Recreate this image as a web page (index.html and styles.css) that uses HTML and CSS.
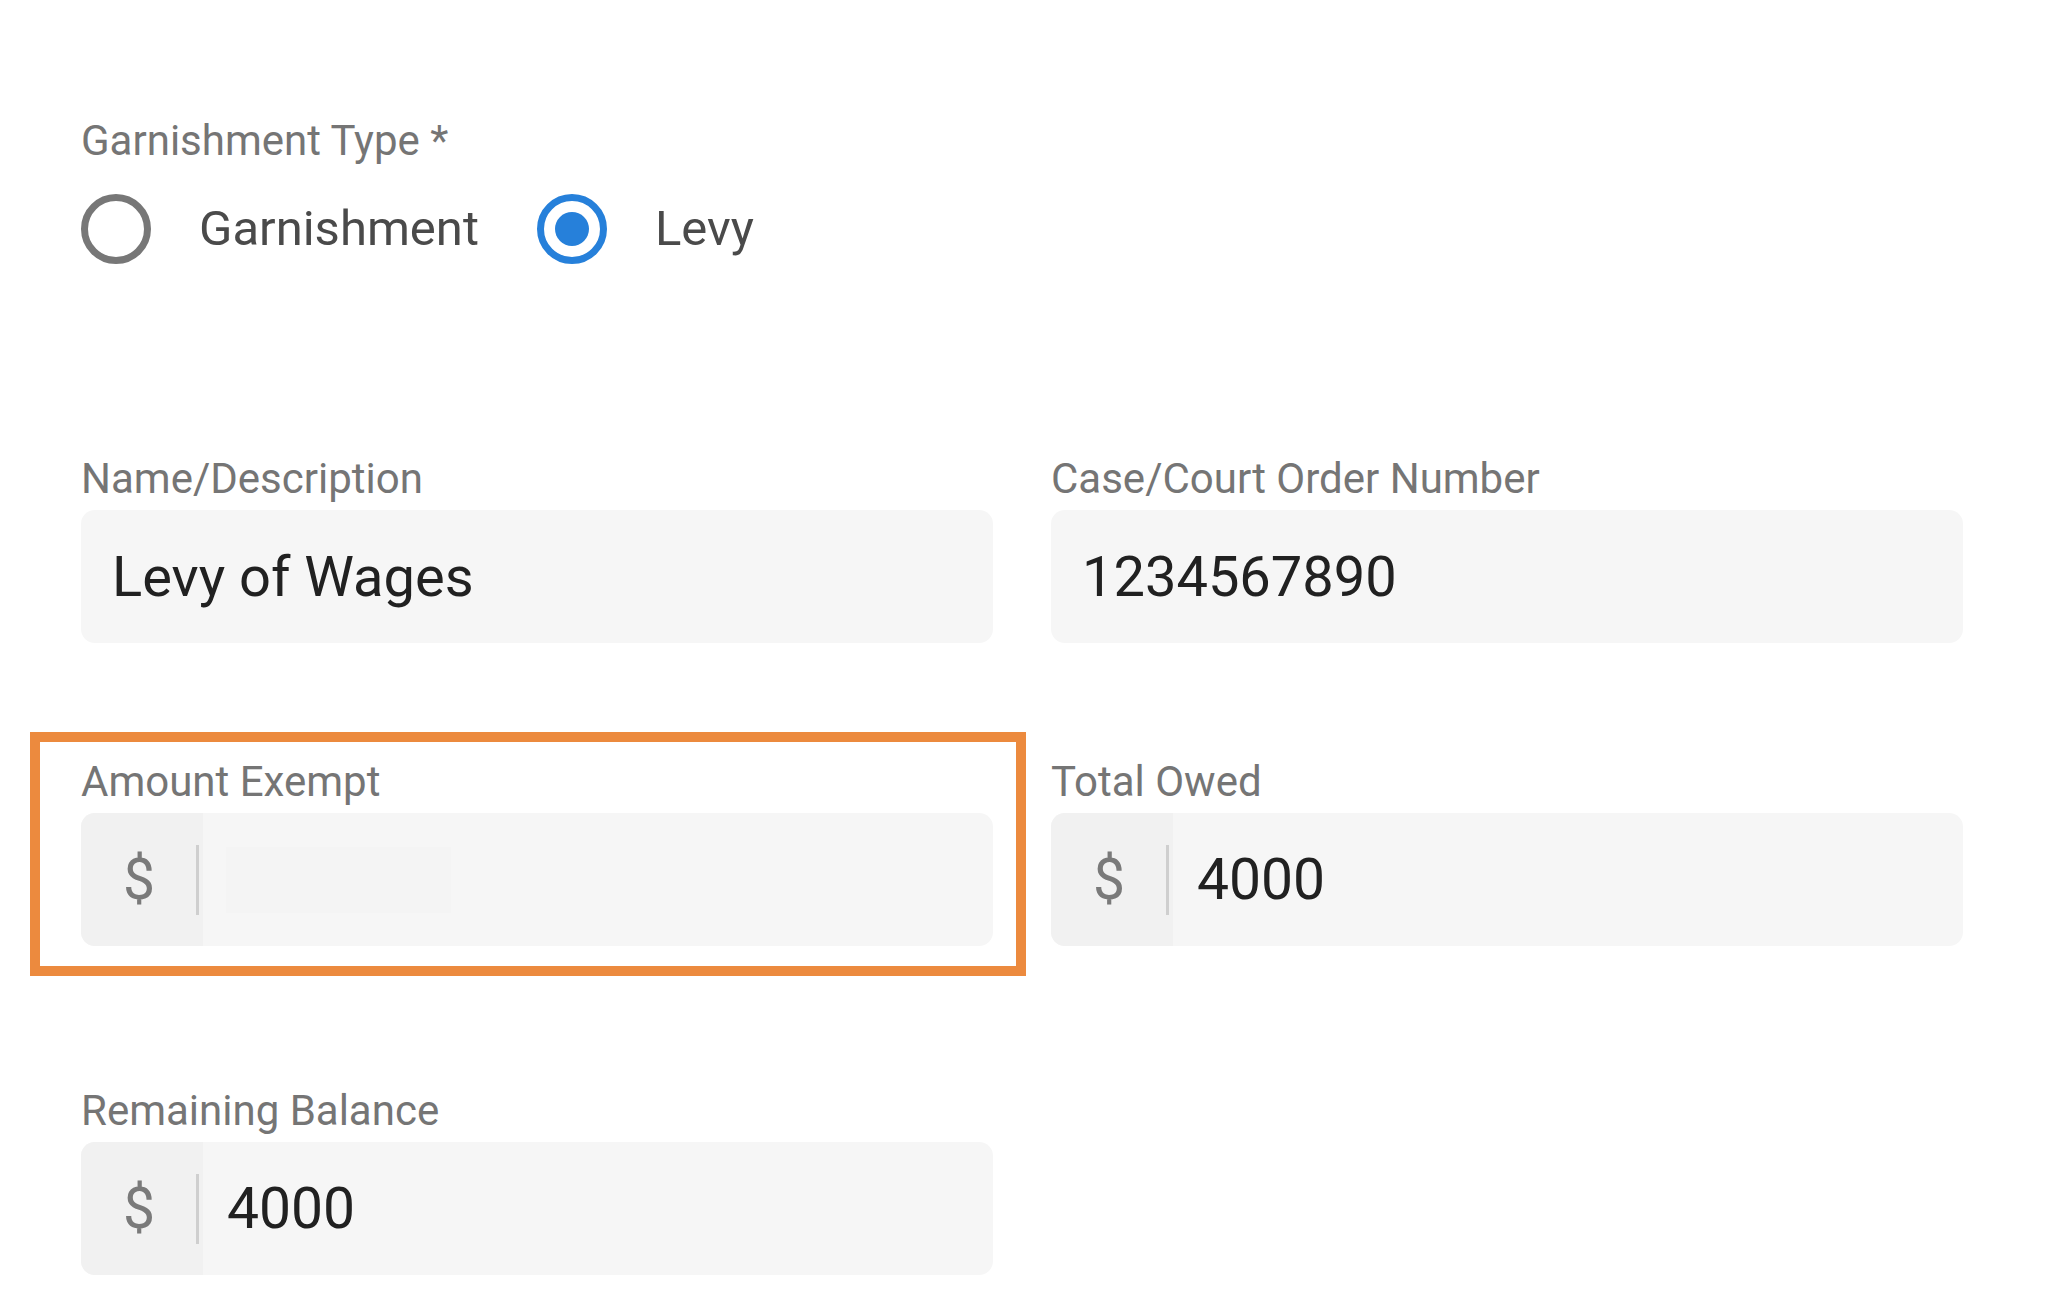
FILE: index.html
```html
<!DOCTYPE html>
<html lang="en">
<head>
    <meta charset="UTF-8">
    <meta name="viewport" content="width=device-width, initial-scale=1.0">
    <title>Garnishment</title>
    <link rel="stylesheet" href="styles.css">
</head>
<body>
    <div class="form">
        <div class="field-label">Garnishment Type *</div>
        <div class="radio-group">
            <div class="option">
                <span class="radio"></span>
                <span class="option-text">Garnishment</span>
            </div>
            <div class="option">
                <span class="radio checked"></span>
                <span class="option-text">Levy</span>
            </div>
        </div>

        <div class="row row-first">
            <div class="field">
                <div class="field-label">Name/Description</div>
                <div class="input">
                    <span class="value plain">Levy of Wages</span>
                </div>
            </div>
            <div class="field">
                <div class="field-label">Case/Court Order Number</div>
                <div class="input">
                    <span class="value plain">1234567890</span>
                </div>
            </div>
        </div>

        <div class="row row-second">
            <div class="field highlighted">
                <div class="field-label">Amount Exempt</div>
                <div class="input">
                    <div class="prefix"><span>$</span><i class="divider"></i></div>
                    <span class="blank"></span>
                </div>
            </div>
            <div class="field">
                <div class="field-label">Total Owed</div>
                <div class="input">
                    <div class="prefix"><span>$</span><i class="divider"></i></div>
                    <span class="value">4000</span>
                </div>
            </div>
        </div>

        <div class="row row-third">
            <div class="field">
                <div class="field-label">Remaining Balance</div>
                <div class="input">
                    <div class="prefix"><span>$</span><i class="divider"></i></div>
                    <span class="value">4000</span>
                </div>
            </div>
        </div>
    </div>
</body>
</html>
```

FILE: styles.css
```css
html, body {
    margin: 0;
    height: 100%;
    overflow: hidden;
    background: #fff;
}
body {
    font-family: Roboto, "Noto Sans", Arial, sans-serif;
}
.form {
    padding: 116px 0 0 81px;
}
.field-label {
    font-size: 42px;
    line-height: 50px;
    color: #757575;
}
.radio-group {
    display: flex;
    align-items: center;
    gap: 58px;
    margin-top: 28px;
    height: 70px;
}
.option {
    display: flex;
    align-items: center;
    gap: 48px;
}
.radio {
    width: 70px;
    height: 70px;
    box-sizing: border-box;
    border: 7px solid #777;
    border-radius: 50%;
    display: flex;
    align-items: center;
    justify-content: center;
}
.radio.checked {
    border-color: #2680da;
}
.radio.checked::after {
    content: "";
    width: 34px;
    height: 34px;
    border-radius: 50%;
    background: #2680da;
}
.option-text {
    font-size: 49px;
    line-height: 58px;
    color: #4a4a4a;
}
.row {
    display: grid;
    grid-template-columns: 912px 912px;
    gap: 58px;
}
.row-first {
    margin-top: 190px;
}
.row-second {
    margin-top: 114px;
}
.row-third {
    margin-top: 140px;
}
.field {
    position: relative;
    display: flex;
    flex-direction: column;
    gap: 6px;
}
.highlighted::after {
    content: "";
    position: absolute;
    top: -25px;
    left: -51px;
    right: -33px;
    bottom: -30px;
    border: 10px solid #ec8a3e;
}
.input {
    display: flex;
    align-items: center;
    height: 133px;
    background: #f6f6f6;
    border-radius: 14px;
    overflow: hidden;
}
.prefix {
    display: flex;
    align-items: center;
    width: 122px;
    height: 100%;
    box-sizing: border-box;
    padding: 0 4px 0 42px;
    background: #f1f1f1;
    font-size: 57px;
    color: #7a7a7a;
}
.divider {
    width: 3px;
    height: 70px;
    margin-left: auto;
    background: #cfcfcf;
}
.value {
    font-size: 57px;
    color: #212121;
    padding-left: 24px;
}
.value.plain {
    font-size: 56px;
    padding-left: 31px;
}
.blank {
    width: 225px;
    height: 66px;
    margin-left: 23px;
    background: #f4f4f4;
}
```
